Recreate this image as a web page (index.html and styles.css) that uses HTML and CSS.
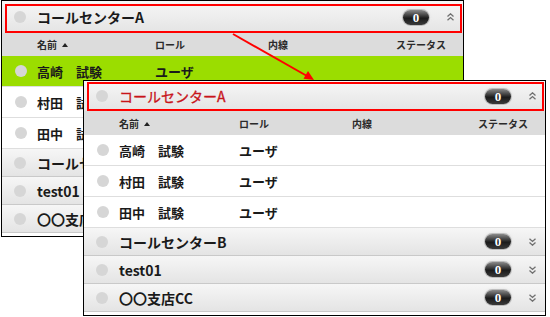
FILE: index.html
```html
<!DOCTYPE html>
<html lang="ja">
<head>
  <meta charset="UTF-8" />
  <meta name="viewport" content="width=device-width, initial-scale=1" />
  <title>コールセンター</title>
  <link rel="stylesheet" href="styles.css">
</head>
<body>
  <div class="canvas">

    <!-- before: group A with a selected user -->
    <section class="panel panel-back">
      <div class="group-head open marked">
        <span class="dot"></span>
        <span class="group-name">コールセンターA</span>
        <span class="badge">0</span>
        <svg class="chev" width="7" height="8" viewBox="0 0 7 8"><path d="M0.5 3.5 L3.5 0.8 L6.5 3.5 M0.5 7.3 L3.5 4.6 L6.5 7.3" /></svg>
      </div>
      <div class="cols">
        <span></span>
        <span>名前 <i class="sort"></i></span>
        <span>ロール</span>
        <span>内線</span>
        <span class="status">ステータス</span>
      </div>
      <div class="row selected">
        <span><span class="dot"></span></span>
        <span>高崎　試験</span>
        <span>ユーザ</span>
        <span></span>
        <span></span>
      </div>
      <div class="row">
        <span><span class="dot"></span></span>
        <span>村田　試験</span>
        <span>ユーザ</span>
        <span></span>
        <span></span>
      </div>
      <div class="row">
        <span><span class="dot"></span></span>
        <span>田中　試験</span>
        <span>ユーザ</span>
        <span></span>
        <span></span>
      </div>
      <div class="group-head">
        <span class="dot"></span>
        <span class="group-name">コールセンターB</span>
      </div>
      <div class="group-head">
        <span class="dot"></span>
        <span class="group-name">test01</span>
      </div>
      <div class="group-head">
        <span class="dot"></span>
        <span class="group-name">〇〇支店CC</span>
      </div>
    </section>

    <!-- after: same list, group title highlighted -->
    <section class="panel panel-front">
      <div class="group-head open marked">
        <span class="dot"></span>
        <span class="group-name red">コールセンターA</span>
        <span class="badge">0</span>
        <svg class="chev" width="7" height="8" viewBox="0 0 7 8"><path d="M0.5 3.5 L3.5 0.8 L6.5 3.5 M0.5 7.3 L3.5 4.6 L6.5 7.3" /></svg>
      </div>
      <div class="cols">
        <span></span>
        <span>名前 <i class="sort"></i></span>
        <span>ロール</span>
        <span>内線</span>
        <span class="status">ステータス</span>
      </div>
      <div class="row">
        <span><span class="dot"></span></span>
        <span>高崎　試験</span>
        <span>ユーザ</span>
        <span></span>
        <span></span>
      </div>
      <div class="row">
        <span><span class="dot"></span></span>
        <span>村田　試験</span>
        <span>ユーザ</span>
        <span></span>
        <span></span>
      </div>
      <div class="row">
        <span><span class="dot"></span></span>
        <span>田中　試験</span>
        <span>ユーザ</span>
        <span></span>
        <span></span>
      </div>
      <div class="group-head">
        <span class="dot"></span>
        <span class="group-name">コールセンターB</span>
        <span class="badge">0</span>
        <svg class="chev" width="7" height="8" viewBox="0 0 7 8"><path d="M0.5 0.7 L3.5 3.4 L6.5 0.7 M0.5 4.5 L3.5 7.2 L6.5 4.5" /></svg>
      </div>
      <div class="group-head">
        <span class="dot"></span>
        <span class="group-name">test01</span>
        <span class="badge">0</span>
        <svg class="chev" width="7" height="8" viewBox="0 0 7 8"><path d="M0.5 0.7 L3.5 3.4 L6.5 0.7 M0.5 4.5 L3.5 7.2 L6.5 4.5" /></svg>
      </div>
      <div class="group-head">
        <span class="dot"></span>
        <span class="group-name">〇〇支店CC</span>
        <span class="badge">0</span>
        <svg class="chev" width="7" height="8" viewBox="0 0 7 8"><path d="M0.5 0.7 L3.5 3.4 L6.5 0.7 M0.5 4.5 L3.5 7.2 L6.5 4.5" /></svg>
      </div>
    </section>

    <svg class="arrow" width="550" height="317" viewBox="0 0 550 317">
      <line x1="233" y1="34" x2="307" y2="76" />
      <polygon points="314,80 303.5,78.8 308,71" />
    </svg>
  </div>
</body>
</html>
```

FILE: styles.css
```css
body {
  margin: 0;
  background: #fff;
  font-family: "Noto Sans CJK JP", "Noto Sans", sans-serif;
  color: #1a1a1a;
}

.canvas {
  position: relative;
  width: 550px;
  height: 317px;
  overflow: hidden;
}

.panel {
  position: absolute;
  width: 461px;
  border: 1px solid #000;
  background: #fff;
  padding-bottom: 3px;
}

.panel-back {
  left: 1px;
  top: 0;
}

.panel-front {
  left: 83px;
  top: 80px;
}

.group-head {
  position: relative;
  display: flex;
  align-items: center;
  height: 27px;
  padding-right: 9px;
  background: linear-gradient(#f6f6f6, #e4e4e4);
  border-bottom: 1px solid #c9c9c9;
}

.group-head.open {
  height: 30px;
  border-bottom: none;
}

.panel-back .group-head.open {
  height: 32px;
}

.group-head.marked::after {
  content: "";
  position: absolute;
  left: 3px;
  top: 1px;
  right: 1px;
  bottom: 0;
  border: 2px solid #f00;
}

.panel-back .group-head.marked::after {
  top: 3px;
}

.dot {
  display: inline-block;
  width: 12px;
  height: 12px;
  border-radius: 50%;
  background: #d6d6d6;
  margin-left: 12px;
  flex: none;
}

.group-head .dot {
  margin-right: 11px;
}

.group-name {
  font-size: 14px;
  font-weight: bold;
  flex: 1;
}

.group-name.red {
  color: #c8141a;
  font-weight: normal;
  -webkit-text-stroke: 0.3px #c8141a;
}

.badge {
  width: 26px;
  height: 15px;
  line-height: 15px;
  border-radius: 8px;
  text-align: center;
  color: #fff;
  font: bold 13px "Liberation Serif", serif;
  background: linear-gradient(#8a8a8a, #1b1b1b 55%, #3a3a3a);
  box-shadow: 0 0 0 1px #bdbdbd, 0 0 2px 2px #e9e9e9;
}

.chev {
  margin-left: 18px;
  fill: none;
  stroke: #707070;
  stroke-width: 1.3;
}

.cols,
.row {
  display: grid;
  grid-template-columns: 35px 120px 113px 1fr auto;
  align-items: center;
  padding-right: 17px;
}

.cols {
  height: 24px;
  background: #dcdcdc;
  font-size: 10px;
  font-weight: bold;
  color: #2a2a2a;
}

.panel-back .cols {
  height: 23px;
  grid-template-columns: 35px 118px 113px 1fr auto;
}

.panel-back .row {
  grid-template-columns: 35px 118px 113px 1fr auto;
}

.sort {
  display: inline-block;
  width: 0;
  height: 0;
  margin-left: 3px;
  vertical-align: 2px;
  border-left: 3px solid transparent;
  border-right: 3px solid transparent;
  border-bottom: 4px solid #222;
}

.status {
  text-align: right;
}

.row {
  height: 30px;
  border-bottom: 1px solid #dedede;
  font-size: 13px;
  font-weight: bold;
}

.row .dot {
  display: block;
  margin-left: 13px;
}

.row.selected {
  background: #9bdd00;
}

.arrow {
  position: absolute;
  left: 0;
  top: 0;
  pointer-events: none;
}

.arrow line {
  stroke: #f00;
  stroke-width: 2;
}

.arrow polygon {
  fill: #f00;
}
```
